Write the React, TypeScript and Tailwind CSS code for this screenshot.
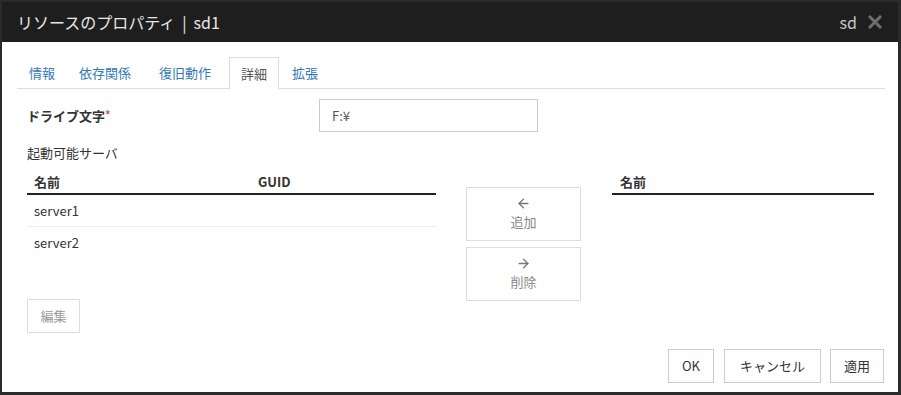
import { ArrowLeft, ArrowRight } from "lucide-react";

const font = "font-['Noto_Sans_CJK_JP',sans-serif]";

// gap after each tab, taken from the screenshot
const tabs = [
  { label: "情報", gap: "mr-[0px]" },
  { label: "依存関係", gap: "mr-[4px]" },
  { label: "復旧動作", gap: "mr-[6px]" },
  { label: "詳細", gap: "mr-[1px]" },
  { label: "拡張", gap: "mr-[0px]" },
];

const App = () => {
  return (
    <div className={`w-[901px] h-[395px] bg-[#2b2b2b] pt-[2px] pl-[2px] pr-[3px] pb-[3px] ${font}`}>
      <div className="flex flex-col h-full bg-white">
        {/* Title bar */}
        <div className="h-[40px] bg-[#1e1e1e] flex items-center justify-between pl-[15px] pr-[16px]">
          <div className="flex items-center text-[16px] text-[#e8e8e8] leading-none">
            <span>リソースのプロパティ</span>
            <span className="mx-[7px]">|</span>
            <span>sd1</span>
          </div>
          <div className="flex items-center gap-[11px]">
            <span className="text-[16px] text-[#c8c8c8] leading-none">sd</span>
            <svg width="14" height="14" viewBox="0 0 14 14">
              <path d="M2 2 L12 12 M12 2 L2 12" stroke="#6f6f6f" strokeWidth="3" strokeLinecap="square" />
            </svg>
          </div>
        </div>

        <div className="flex flex-col flex-1 pt-[15px] pl-[15px] pr-[13px]">
          {/* Tabs */}
          <div className="flex border-b border-[#ddd] h-[32px]">
            {tabs.map((t) => (
              <div
                key={t.label}
                className={
                  t.label === "詳細"
                    ? `h-[33px] px-[11px] ${t.gap} flex items-center text-[13px] text-[#555] bg-white border border-[#ddd] border-b-white`
                    : `h-[32px] px-[12px] ${t.gap} flex items-center text-[13px] text-[#337ab7]`
                }
              >
                {t.label}
              </div>
            ))}
          </div>

          <div className="flex flex-col pl-[10px]">
            {/* Drive letter */}
            <div className="flex items-center h-[33px] mt-[10px]">
              <div className="w-[292px] text-[13px] font-bold text-[#333]">
                ドライブ文字<span className="text-[#d9534f] align-top text-[11px]">*</span>
              </div>
              <div className="w-[219px] h-[33px] border border-[#ccc] flex items-center px-[12px] text-[13px] text-[#555]">
                F:¥
              </div>
            </div>

            <div className="mt-[12px] text-[13px] text-[#333] leading-[18px]">起動可能サーバ</div>

            <div className="flex mt-[9px]">
              {/* Left table */}
              <div className="w-[409px] flex flex-col">
                <div className="flex h-[24px] items-center border-b-2 border-[#222] text-[13px] font-bold text-[#333]">
                  <div className="w-[231px] pl-[7px]">名前</div>
                  <div>GUID</div>
                </div>
                <div className="h-[32px] flex items-center pl-[7px] border-b border-[#eee] text-[13px] text-[#333]">server1</div>
                <div className="h-[31px] flex items-center pl-[7px] text-[13px] text-[#333]">server2</div>
              </div>

              {/* Middle buttons */}
              <div className="ml-[30px] w-[115px] flex flex-col gap-[6px] pt-[16px]">
                <div className="h-[54px] border border-[#ddd] flex flex-col items-center justify-center gap-[1px] text-[13px] text-[#888]">
                  <ArrowLeft size={15} strokeWidth={2.25} color="#777" />
                  <span>追加</span>
                </div>
                <div className="h-[54px] border border-[#ddd] flex flex-col items-center justify-center gap-[1px] text-[13px] text-[#888]">
                  <ArrowRight size={15} strokeWidth={2.25} color="#777" />
                  <span>削除</span>
                </div>
              </div>

              {/* Right table */}
              <div className="ml-[31px] w-[262px] flex flex-col">
                <div className="flex h-[24px] items-center border-b-2 border-[#222] text-[13px] font-bold text-[#333] pl-[8px]">
                  名前
                </div>
              </div>
            </div>

            <div className="-mt-[2px]">
              <div className="w-[53px] h-[34px] border border-[#ddd] flex items-center justify-center text-[13px] text-[#999]">
                編集
              </div>
            </div>
          </div>

          {/* Footer */}
          <div className="flex justify-end mt-[16px] pr-[1px]">
            <div className="w-[46px] h-[34px] border border-[#ccc] flex items-center justify-center text-[13px] text-[#333]">OK</div>
            <div className="ml-[10px] w-[97px] h-[34px] border border-[#ccc] flex items-center justify-center text-[13px] text-[#333]">キャンセル</div>
            <div className="ml-[9px] w-[54px] h-[34px] border border-[#ccc] flex items-center justify-center text-[13px] text-[#333]">適用</div>
          </div>
        </div>
      </div>
    </div>
  );
};

export default App;
